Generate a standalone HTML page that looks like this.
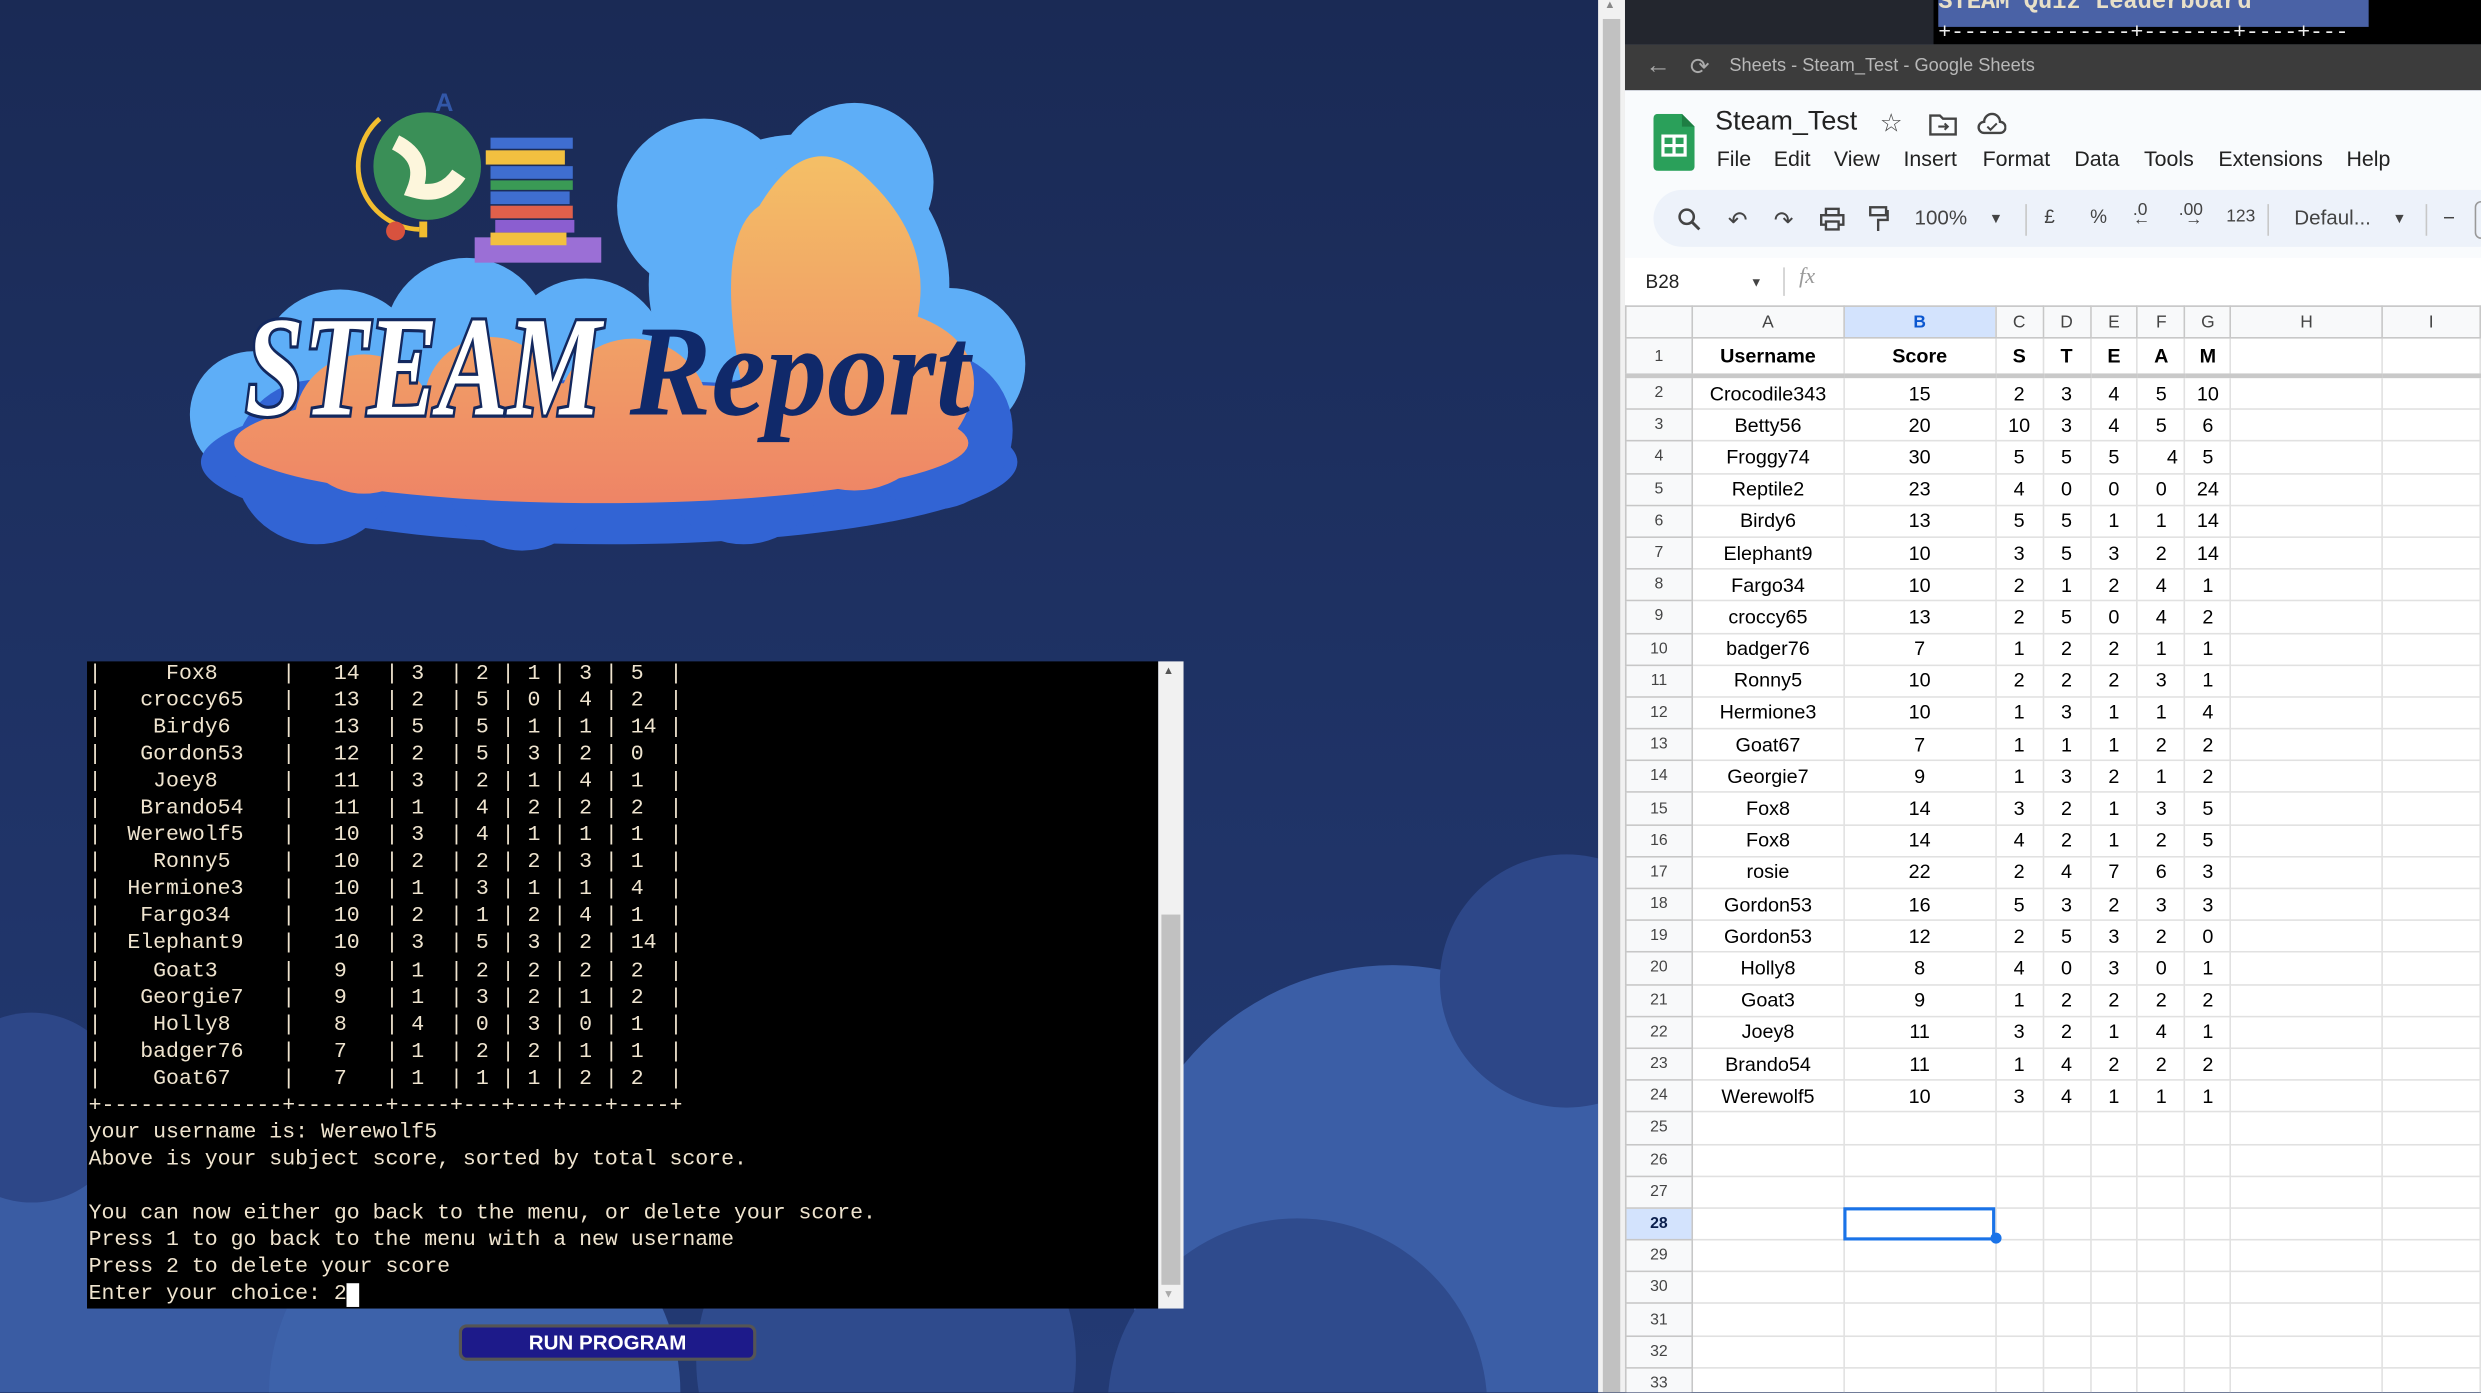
<!DOCTYPE html>
<html><head><meta charset="utf-8">
<style>
html,body{margin:0;padding:0;width:2481px;height:1393px;overflow:hidden;background:#1c2d5a;}
.s{position:absolute;left:0;top:0;width:1568px;height:880px;overflow:hidden;transform:scale(1.58227);transform-origin:0 0;font-family:"Liberation Sans",Arial,sans-serif;}
.abs{position:absolute;}
pre.term{position:absolute;left:55px;top:418px;width:677px;height:409px;margin:0;background:#000;color:#efe4cf;font-family:"Liberation Mono",monospace;font-size:13.6px;line-height:17.05px;padding:0 0 0 1px;box-sizing:border-box;overflow:hidden;white-space:pre;}
.tb{position:absolute;top:130px;font-size:13px;color:#444;}
table.g{position:absolute;left:1027px;top:193px;border-collapse:collapse;table-layout:fixed;font-size:12.5px;color:#000;background:#fff;}
table.g td{border:1px solid #e1e1e1;padding:0;text-align:center;overflow:hidden;white-space:nowrap;height:19.2px;}
table.g td.rh{background:#f8f9fa;color:#444;font-size:10px;border-color:#c7c7c7;}
table.g tr.ch td{background:#f8f9fa;color:#444;font-size:11px;height:19px;border-color:#c7c7c7;}
table.g tr.r1 td{height:22px;font-weight:bold;border-bottom:3px solid #c9c9c9;}
.menu span{position:absolute;top:93px;font-size:13.5px;color:#222;}
</style></head><body>
<div class="s">
<svg class="abs" style="left:0;top:0" width="1010" height="881">
<defs>
<linearGradient id="bg" x1="0" y1="0" x2="0" y2="1"><stop offset="0" stop-color="#1a2a55"/><stop offset="1" stop-color="#233a74"/></linearGradient>
<linearGradient id="or" x1="0" y1="0" x2="0" y2="1"><stop offset="0" stop-color="#f4bf66"/><stop offset="1" stop-color="#ee8166"/></linearGradient>
<linearGradient id="or2" gradientUnits="userSpaceOnUse" x1="0" y1="100" x2="0" y2="330"><stop offset="0" stop-color="#f4bf66"/><stop offset="1" stop-color="#ee8166"/></linearGradient>
</defs>
<rect width="1010" height="881" fill="url(#bg)"/>
<circle cx="80" cy="840" r="140" fill="#3a5ca3"/>
<circle cx="300" cy="880" r="130" fill="#3d62aa"/>
<circle cx="560" cy="860" r="120" fill="#2f4b8d"/>
<circle cx="880" cy="780" r="170" fill="#3b5ea6"/>
<circle cx="990" cy="620" r="80" fill="#2d4788"/>
<circle cx="820" cy="890" r="120" fill="#2f4b8d"/>
<circle cx="20" cy="700" r="60" fill="#2d4788"/>
<g>
<circle cx="505" cy="180" r="95" fill="#5eaef7"/>
<circle cx="445" cy="130" r="55" fill="#5eaef7"/>
<circle cx="540" cy="115" r="50" fill="#5eaef7"/>
<circle cx="600" cy="230" r="48" fill="#5eaef7"/>
<circle cx="215" cy="235" r="52" fill="#5eaef7"/>
<circle cx="295" cy="215" r="52" fill="#5eaef7"/>
<circle cx="370" cy="228" r="52" fill="#5eaef7"/>
<circle cx="160" cy="262" r="40" fill="#5eaef7"/>
<ellipse cx="385" cy="292" rx="258" ry="52" fill="#3264d4"/>
<circle cx="200" cy="292" r="52" fill="#3264d4"/>
<circle cx="330" cy="300" r="48" fill="#3264d4"/>
<circle cx="470" cy="292" r="52" fill="#3264d4"/>
<circle cx="590" cy="272" r="50" fill="#3264d4"/>
<path d="M470 250 Q450 150 480 130 Q510 80 545 110 Q590 150 580 200 Q620 215 615 250 Q600 300 540 300 Z" fill="url(#or2)"/>
<circle cx="230" cy="268" r="44" fill="url(#or2)"/>
<circle cx="310" cy="255" r="42" fill="url(#or2)"/>
<circle cx="400" cy="262" r="48" fill="url(#or2)"/>
<circle cx="540" cy="255" r="55" fill="url(#or2)"/>
<ellipse cx="380" cy="280" rx="232" ry="38" fill="url(#or2)"/>
<rect x="300" y="150" width="80" height="16" fill="#9b6fd6"/>
<circle cx="270" cy="105" r="34" fill="#3a8f57"/>
<path d="M250 90 Q270 100 262 120 Q280 125 290 110" stroke="#fdf6dc" stroke-width="10" fill="none"/>
<path d="M240 75 A40 40 0 0 0 265 145" stroke="#f2bd2f" stroke-width="3" fill="none"/>
<rect x="265" y="140" width="5" height="10" fill="#f2bd2f"/>
<circle cx="250" cy="146" r="6" fill="#d8523e"/>
<text x="275" y="70" font-size="16" fill="#3257a8" font-weight="bold">A</text>
<rect x="310" y="87" width="52" height="7" fill="#3f6ed0"/>
<rect x="307" y="95" width="50" height="9" fill="#f2c040"/>
<rect x="310" y="105" width="52" height="8" fill="#3f6ed0"/>
<rect x="310" y="114" width="52" height="6" fill="#3a9a55"/>
<rect x="310" y="121" width="50" height="8" fill="#3f6ed0"/>
<rect x="310" y="130" width="52" height="8" fill="#e0604b"/>
<rect x="313" y="139" width="50" height="8" fill="#8b5ed0"/>
<rect x="310" y="147" width="48" height="8" fill="#f2c040"/>
</g>
<text x="155" y="262" font-family="Liberation Serif,serif" font-style="italic" font-weight="bold" font-size="90" fill="#fff" stroke="#13285e" stroke-width="4" paint-order="stroke" textLength="225" lengthAdjust="spacingAndGlyphs">STEAM</text>
<text x="398" y="262" font-family="Liberation Serif,serif" font-style="italic" font-weight="bold" font-size="82" fill="#10296a" textLength="215" lengthAdjust="spacingAndGlyphs">Report</text>
</svg>

<pre class="term">|     Fox8     |   14  | 3  | 2 | 1 | 3 | 5  |
|   croccy65   |   13  | 2  | 5 | 0 | 4 | 2  |
|    Birdy6    |   13  | 5  | 5 | 1 | 1 | 14 |
|   Gordon53   |   12  | 2  | 5 | 3 | 2 | 0  |
|    Joey8     |   11  | 3  | 2 | 1 | 4 | 1  |
|   Brando54   |   11  | 1  | 4 | 2 | 2 | 2  |
|  Werewolf5   |   10  | 3  | 4 | 1 | 1 | 1  |
|    Ronny5    |   10  | 2  | 2 | 2 | 3 | 1  |
|  Hermione3   |   10  | 1  | 3 | 1 | 1 | 4  |
|   Fargo34    |   10  | 2  | 1 | 2 | 4 | 1  |
|  Elephant9   |   10  | 3  | 5 | 3 | 2 | 14 |
|    Goat3     |   9   | 1  | 2 | 2 | 2 | 2  |
|   Georgie7   |   9   | 1  | 3 | 2 | 1 | 2  |
|    Holly8    |   8   | 4  | 0 | 3 | 0 | 1  |
|   badger76   |   7   | 1  | 2 | 2 | 1 | 1  |
|    Goat67    |   7   | 1  | 1 | 1 | 2 | 2  |
+--------------+-------+----+---+---+---+----+
your username is: Werewolf5
Above is your subject score, sorted by total score.

You can now either go back to the menu, or delete your score.
Press 1 to go back to the menu with a new username
Press 2 to delete your score
Enter your choice: 2<span style="background:#fff;color:#000"> </span></pre>
<div class="abs" style="left:732px;top:418px;width:16px;height:409px;background:#f1f1f1"></div>
<div class="abs" style="left:734px;top:578px;width:12px;height:234px;background:#c1c1c1"></div>
<div class="abs" style="left:735px;top:421px;font-size:7px;color:#555">▲</div>
<div class="abs" style="left:735px;top:815px;font-size:7px;color:#aaa">▼</div>
<div class="abs" style="left:290px;top:837px;width:184px;height:19px;background:#1d1a8a;border:2px solid #555;border-radius:5px;color:#fff;font-weight:bold;font-size:13px;text-align:center;line-height:19px">RUN PROGRAM</div>

<div class="abs" style="left:1010px;top:0;width:17px;height:881px;background:#f1f1f1"></div>
<div class="abs" style="left:1013px;top:12px;width:11px;height:869px;background:#c1c1c1"></div>
<div class="abs" style="left:1014px;top:0;font-size:7px;color:#888">▲</div>

<div class="abs" style="left:1027px;top:0;width:541px;height:28px;background:#23262e"></div>
<div class="abs" style="left:1222px;top:0;width:346px;height:28px;background:#000"></div>
<div class="abs" style="left:1225px;top:0;width:272px;height:17px;background:#4a62a6;overflow:hidden;color:#e8e0c8;font-family:'Liberation Mono',monospace;font-size:15px;font-weight:bold;line-height:4px">STEAM Quiz Leaderboard</div>
<div class="abs" style="left:1225px;top:14px;color:#eee;font-family:'Liberation Mono',monospace;font-size:13.5px;white-space:pre">+--------------+-------+----+---</div>

<div class="abs" style="left:1027px;top:28px;width:541px;height:29px;background:#3c3c3c"></div>
<div class="abs" style="left:1040px;top:33px;font-size:16px;color:#aaa">←</div>
<div class="abs" style="left:1068px;top:33px;font-size:15px;color:#aaa">⟳</div>
<div class="abs" style="left:1093px;top:36px;font-size:11.5px;color:#b8b8b8">Sheets - Steam_Test - Google Sheets</div>

<div class="abs" style="left:1027px;top:57px;width:541px;height:136px;background:#f9fbfd"></div>
<svg class="abs" style="left:1045px;top:72px" width="26" height="36"><path d="M0 3 Q0 0 3 0 H18 L26 8 V33 Q26 36 23 36 H3 Q0 36 0 33 Z" fill="#2aa05a"/><path d="M18 0 V8 H26" fill="#1e7e43"/><rect x="6" y="14" width="14" height="12" fill="none" stroke="#fff" stroke-width="2"/><line x1="6" y1="20" x2="20" y2="20" stroke="#fff" stroke-width="2"/><line x1="13" y1="14" x2="13" y2="26" stroke="#fff" stroke-width="2"/></svg>
<div class="abs" style="left:1084px;top:67px;font-size:17px;color:#222">Steam_Test</div>
<div class="abs" style="left:1188px;top:68px;font-size:16px;color:#444">☆</div>
<svg class="abs" style="left:1219px;top:71px" width="18" height="15"><path d="M1 2 H7 L9 4 H17 V14 H1 Z" fill="none" stroke="#444" stroke-width="1.5"/><path d="M6 9 H12 M10 7 L12 9 L10 11" stroke="#444" fill="none" stroke-width="1.3"/></svg>
<svg class="abs" style="left:1249px;top:71px" width="19" height="15"><path d="M5 13 H15 A3.5 3.5 0 0 0 15 6 A5 5 0 0 0 5 6 A3.5 3.5 0 0 0 5 13 Z" fill="none" stroke="#444" stroke-width="1.5"/><path d="M7 9 L9 11 L13 7" stroke="#444" fill="none" stroke-width="1.3"/></svg>
<div class="menu"><span style="left:1085px">File</span><span style="left:1121px">Edit</span><span style="left:1159px">View</span><span style="left:1203px">Insert</span><span style="left:1253px">Format</span><span style="left:1311px">Data</span><span style="left:1355px">Tools</span><span style="left:1402px">Extensions</span><span style="left:1483px">Help</span></div>
<div class="abs" style="left:1045px;top:120px;width:540px;height:36px;background:#edf2fa;border-radius:18px"></div>
<svg class="abs" style="left:1060px;top:131px" width="15" height="15"><circle cx="6" cy="6" r="4.5" fill="none" stroke="#444" stroke-width="1.6"/><line x1="9.5" y1="9.5" x2="14" y2="14" stroke="#444" stroke-width="1.8"/></svg>
<div class="tb" style="left:1092px;font-size:15px">↶</div>
<div class="tb" style="left:1121px;font-size:15px">↷</div>
<svg class="abs" style="left:1150px;top:131px" width="16" height="15"><rect x="4" y="1" width="8" height="4" fill="none" stroke="#444" stroke-width="1.5"/><rect x="1" y="5" width="14" height="6" fill="none" stroke="#444" stroke-width="1.5"/><rect x="4" y="9" width="8" height="5" fill="#edf2fa" stroke="#444" stroke-width="1.5"/></svg>
<svg class="abs" style="left:1181px;top:130px" width="13" height="18"><rect x="1" y="1" width="10" height="5" fill="none" stroke="#444" stroke-width="1.5"/><path d="M11 3.5 H12 V9 H6 V16" fill="none" stroke="#444" stroke-width="1.5"/></svg>
<div class="tb" style="left:1210px">100%</div>
<div class="tb" style="left:1257px;font-size:9px;top:133px">▼</div>
<div class="abs" style="left:1280px;top:129px;width:1px;height:20px;background:#c7c7c7"></div>
<div class="tb" style="left:1292px;font-size:12px">£</div>
<div class="tb" style="left:1321px;font-size:12px">%</div>
<div class="tb" style="left:1348px;font-size:11px;top:127px">.0<br><span style="position:relative;top:-6px">←</span></div>
<div class="tb" style="left:1377px;font-size:11px;top:127px">.00<br><span style="position:relative;top:-6px;left:4px">→</span></div>
<div class="tb" style="left:1407px;font-size:11px;top:131px">123</div>
<div class="abs" style="left:1433px;top:129px;width:1px;height:20px;background:#c7c7c7"></div>
<div class="tb" style="left:1450px">Defaul...</div>
<div class="tb" style="left:1512px;font-size:9px;top:133px">▼</div>
<div class="abs" style="left:1533px;top:129px;width:1px;height:20px;background:#c7c7c7"></div>
<div class="tb" style="left:1544px">−</div>
<div class="abs" style="left:1564px;top:127px;width:10px;height:22px;border:1px solid #999;border-radius:4px"></div>
<div class="abs" style="left:1027px;top:163px;width:541px;height:30px;background:#fff"></div>
<div class="abs" style="left:1040px;top:171px;font-size:12px;color:#222">B28</div>
<div class="abs" style="left:1106px;top:174px;font-size:8px;color:#444">▼</div>
<div class="abs" style="left:1127px;top:169px;width:1px;height:18px;background:#ccc"></div>
<div class="abs" style="left:1137px;top:168px;font-size:14px;color:#999;font-style:italic;font-family:'Liberation Serif',serif">fx</div>

<table class="g">
<colgroup><col style="width:42px"><col style="width:96px"><col style="width:96px"><col style="width:30px"><col style="width:30px"><col style="width:30px"><col style="width:30px"><col style="width:29px"><col style="width:96px"><col style="width:62px"></colgroup>
<tr class="ch"><td></td><td>A</td><td style="background:#d3e3fd;font-weight:bold;color:#0b57d0">B</td><td>C</td><td>D</td><td>E</td><td>F</td><td>G</td><td>H</td><td>I</td></tr>
<tr class="r1"><td class="rh" style="font-weight:normal">1</td><td>Username</td><td>Score</td><td>S</td><td>T</td><td>E</td><td>A</td><td>M</td><td></td><td></td></tr>
<tr><td class="rh">2</td><td>Crocodile343</td><td>15</td><td>2</td><td>3</td><td>4</td><td>5</td><td>10</td><td></td><td></td></tr>
<tr><td class="rh">3</td><td>Betty56</td><td>20</td><td>10</td><td>3</td><td>4</td><td>5</td><td>6</td><td></td><td></td></tr>
<tr><td class="rh">4</td><td>Froggy74</td><td>30</td><td>5</td><td>5</td><td>5</td><td style="text-align:right;padding-right:4px">4</td><td>5</td><td></td><td></td></tr>
<tr><td class="rh">5</td><td>Reptile2</td><td>23</td><td>4</td><td>0</td><td>0</td><td>0</td><td>24</td><td></td><td></td></tr>
<tr><td class="rh">6</td><td>Birdy6</td><td>13</td><td>5</td><td>5</td><td>1</td><td>1</td><td>14</td><td></td><td></td></tr>
<tr><td class="rh">7</td><td>Elephant9</td><td>10</td><td>3</td><td>5</td><td>3</td><td>2</td><td>14</td><td></td><td></td></tr>
<tr><td class="rh">8</td><td>Fargo34</td><td>10</td><td>2</td><td>1</td><td>2</td><td>4</td><td>1</td><td></td><td></td></tr>
<tr><td class="rh">9</td><td>croccy65</td><td>13</td><td>2</td><td>5</td><td>0</td><td>4</td><td>2</td><td></td><td></td></tr>
<tr><td class="rh">10</td><td>badger76</td><td>7</td><td>1</td><td>2</td><td>2</td><td>1</td><td>1</td><td></td><td></td></tr>
<tr><td class="rh">11</td><td>Ronny5</td><td>10</td><td>2</td><td>2</td><td>2</td><td>3</td><td>1</td><td></td><td></td></tr>
<tr><td class="rh">12</td><td>Hermione3</td><td>10</td><td>1</td><td>3</td><td>1</td><td>1</td><td>4</td><td></td><td></td></tr>
<tr><td class="rh">13</td><td>Goat67</td><td>7</td><td>1</td><td>1</td><td>1</td><td>2</td><td>2</td><td></td><td></td></tr>
<tr><td class="rh">14</td><td>Georgie7</td><td>9</td><td>1</td><td>3</td><td>2</td><td>1</td><td>2</td><td></td><td></td></tr>
<tr><td class="rh">15</td><td>Fox8</td><td>14</td><td>3</td><td>2</td><td>1</td><td>3</td><td>5</td><td></td><td></td></tr>
<tr><td class="rh">16</td><td>Fox8</td><td>14</td><td>4</td><td>2</td><td>1</td><td>2</td><td>5</td><td></td><td></td></tr>
<tr><td class="rh">17</td><td>rosie</td><td>22</td><td>2</td><td>4</td><td>7</td><td>6</td><td>3</td><td></td><td></td></tr>
<tr><td class="rh">18</td><td>Gordon53</td><td>16</td><td>5</td><td>3</td><td>2</td><td>3</td><td>3</td><td></td><td></td></tr>
<tr><td class="rh">19</td><td>Gordon53</td><td>12</td><td>2</td><td>5</td><td>3</td><td>2</td><td>0</td><td></td><td></td></tr>
<tr><td class="rh">20</td><td>Holly8</td><td>8</td><td>4</td><td>0</td><td>3</td><td>0</td><td>1</td><td></td><td></td></tr>
<tr><td class="rh">21</td><td>Goat3</td><td>9</td><td>1</td><td>2</td><td>2</td><td>2</td><td>2</td><td></td><td></td></tr>
<tr><td class="rh">22</td><td>Joey8</td><td>11</td><td>3</td><td>2</td><td>1</td><td>4</td><td>1</td><td></td><td></td></tr>
<tr><td class="rh">23</td><td>Brando54</td><td>11</td><td>1</td><td>4</td><td>2</td><td>2</td><td>2</td><td></td><td></td></tr>
<tr><td class="rh">24</td><td>Werewolf5</td><td>10</td><td>3</td><td>4</td><td>1</td><td>1</td><td>1</td><td></td><td></td></tr>
<tr><td class="rh">25</td><td></td><td></td><td></td><td></td><td></td><td></td><td></td><td></td><td></td></tr>
<tr><td class="rh">26</td><td></td><td></td><td></td><td></td><td></td><td></td><td></td><td></td><td></td></tr>
<tr><td class="rh">27</td><td></td><td></td><td></td><td></td><td></td><td></td><td></td><td></td><td></td></tr>
<tr><td class="rh" style="background:#d3e3fd;font-weight:bold;color:#0b1f4d">28</td><td></td><td style="outline:2px solid #1a73e8;outline-offset:-2px"></td><td></td><td></td><td></td><td></td><td></td><td></td><td></td></tr>
<tr><td class="rh">29</td><td></td><td></td><td></td><td></td><td></td><td></td><td></td><td></td><td></td></tr>
<tr><td class="rh">30</td><td></td><td></td><td></td><td></td><td></td><td></td><td></td><td></td><td></td></tr>
<tr><td class="rh">31</td><td></td><td></td><td></td><td></td><td></td><td></td><td></td><td></td><td></td></tr>
<tr><td class="rh">32</td><td></td><td></td><td></td><td></td><td></td><td></td><td></td><td></td><td></td></tr>
<tr><td class="rh">33</td><td></td><td></td><td></td><td></td><td></td><td></td><td></td><td></td><td></td></tr>
</table>
<div class="abs" style="left:1258px;top:779px;width:7px;height:7px;border-radius:50%;background:#1a73e8"></div>
</div>
</body></html>
